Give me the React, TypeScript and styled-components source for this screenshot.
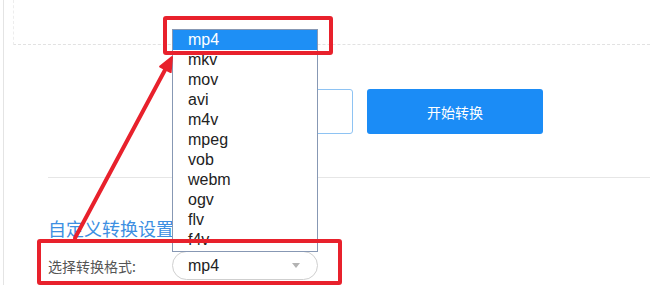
import React from 'react';
import styled, { createGlobalStyle } from 'styled-components';

const GlobalStyle = createGlobalStyle`
  body {
    margin: 0;
    background: #ffffff;
    font-family: "Liberation Sans", "Noto Sans CJK SC", sans-serif;
  }
`;

const Frame = styled.div`
  position: relative;
  height: 285px;
  width: 646px;
  margin-left: 3px;
  border-left: 1px solid #e4e4e4;
  overflow: hidden;
`;

const TopPanel = styled.div`
  margin-left: 9px;
  height: 45px;
  box-sizing: border-box;
  border-left: 1px dashed #ededed;
  border-bottom: 1px dashed #e2e2e2;
`;

const ActionRow = styled.div`
  display: flex;
  gap: 14px;
  margin-top: 44px;
  padding-left: 169px;
`;

const PathInput = styled.div`
  width: 180px;
  height: 45px;
  box-sizing: border-box;
  border: 1px solid #8ec3f3;
  border-radius: 3px;
`;

const StartButton = styled.button`
  width: 176px;
  height: 45px;
  border: none;
  border-radius: 3px;
  background: #1b8cf6;
  color: #ffffff;
  font-family: "Noto Sans CJK SC", sans-serif;
  font-size: 14px;
  cursor: pointer;
`;

const Divider = styled.div`
  margin-top: 43px;
  margin-left: 44px;
  border-top: 1px solid #e6e6e6;
`;

const Settings = styled.section`
  padding: 39px 0 0 44px;
`;

const Title = styled.h3`
  margin: 0;
  font-family: "Noto Sans CJK SC", sans-serif;
  font-weight: normal;
  font-size: 18px;
  line-height: 22px;
  color: #3d8fe2;
`;

const FormRow = styled.div`
  display: flex;
  align-items: center;
  margin-top: 12px;
  height: 29px;
`;

const Label = styled.span`
  width: 124px;
  font-family: "Noto Sans CJK SC", sans-serif;
  font-size: 14px;
  color: #555555;
`;

const Select = styled.div`
  position: relative;
  display: flex;
  align-items: center;
  width: 146px;
  height: 29px;
  box-sizing: border-box;
  padding: 0 17px 0 15px;
  border: 1px solid #cfcfcf;
  border-radius: 15px;
  font-size: 16px;
  color: #222222;
`;

const Caret = styled.span`
  margin-left: auto;
  width: 0;
  height: 0;
  border-left: 4px solid transparent;
  border-right: 4px solid transparent;
  border-top: 5px solid #b3b3b3;
`;

const Menu = styled.ul`
  position: absolute;
  left: -1px;
  bottom: 100%;
  z-index: 5;
  width: 146px;
  height: 223px;
  box-sizing: border-box;
  margin: 0;
  padding: 0;
  list-style: none;
  background: #ffffff;
  border: 1px solid #8798b4;
  overflow: hidden;
`;

const Option = styled.li<{ $active?: boolean }>`
  height: 20px;
  line-height: 20px;
  padding-left: 15px;
  font-size: 16px;
  color: ${(p) => (p.$active ? '#ffffff' : '#222222')};
  background: ${(p) => (p.$active ? '#1e8ff5' : 'transparent')};
`;

const Callout = styled.div<{ $x: number; $y: number; $w: number; $h: number }>`
  position: absolute;
  left: ${(p) => p.$x}px;
  top: ${(p) => p.$y}px;
  width: ${(p) => p.$w}px;
  height: ${(p) => p.$h}px;
  box-sizing: border-box;
  border: 4px solid #e8212c;
  border-radius: 3px;
  z-index: 10;
  pointer-events: none;
`;

const Arrow = styled.svg`
  position: absolute;
  left: 60px;
  top: 50px;
  z-index: 10;
  pointer-events: none;
`;

const formats = ['mp4', 'mkv', 'mov', 'avi', 'm4v', 'mpeg', 'vob', 'webm', 'ogv', 'flv', 'f4v'];

export default function App() {
  return (
    <>
      <GlobalStyle />
      <Frame>
        <TopPanel />
        <ActionRow>
          <PathInput />
          <StartButton>开始转换</StartButton>
        </ActionRow>
        <Divider />
        <Settings>
          <Title>自定义转换设置</Title>
          <FormRow>
            <Label>选择转换格式:</Label>
            <Select>
              mp4
              <Caret />
              <Menu>
                {formats.map((f) => (
                  <Option key={f} $active={f === 'mp4'}>
                    {f}
                  </Option>
                ))}
              </Menu>
            </Select>
          </FormRow>
        </Settings>
        <Callout $x={159} $y={16} $w={170} $h={39} />
        <Callout $x={33} $y={239} $w={305} $h={46} />
        <Arrow width="120" height="195" viewBox="0 0 120 195">
          <line x1="11" y1="188" x2="101.4" y2="19.3" stroke="#e8212c" strokeWidth="4" strokeLinecap="round" />
          <polygon points="108,7 106.7,22.1 96.1,16.5" fill="#e8212c" stroke="#e8212c" strokeWidth="2" strokeLinejoin="round" />
        </Arrow>
      </Frame>
    </>
  );
}
